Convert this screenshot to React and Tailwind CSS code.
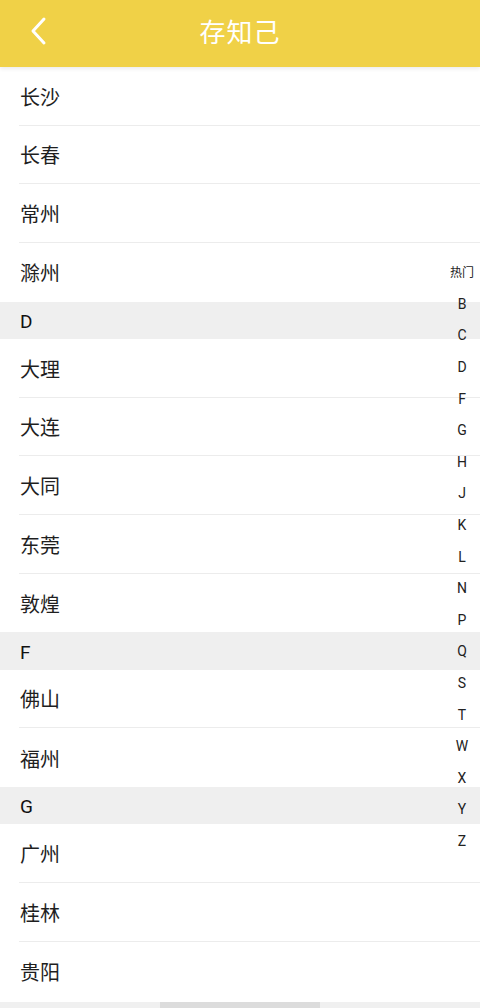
import React from 'react';

const sections = [
    { key: null, cities: ['长沙', '长春', '常州', '滁州'] },
    { key: 'D', cities: ['大理', '大连', '大同', '东莞', '敦煌'] },
    { key: 'F', cities: ['佛山', '福州'] },
    { key: 'G', cities: ['广州', '桂林', '贵阳'] },
];

const letters = ['热门', 'B', 'C', 'D', 'F', 'G', 'H', 'J', 'K', 'L', 'N', 'P', 'Q', 'S', 'T', 'W', 'X', 'Y', 'Z'];

const font = { fontFamily: 'Roboto, "Noto Sans CJK SC", sans-serif' };

const CityRow = ({ name, last }) => (
    <div className="pl-[19px]">
        <div className={`h-[58.67px] flex items-center pl-px pt-[4px] text-[20px] text-[#1f1f1f] ${last ? '' : 'border-b border-[#ececec]'}`}>
            {name}
        </div>
    </div>
);

const App = () => {
    return (
        <div className="relative w-[480px] h-[1008px] overflow-hidden bg-white flex flex-col" style={font}>
            <header className="relative z-10 h-[67px] shrink-0 bg-[#f0d147] flex items-center justify-center shadow-[0_2px_4px_rgba(0,0,0,0.08)]">
                <button className="absolute left-[26px] top-[16px] w-[24px] h-[30px] flex items-center justify-center">
                    <svg width="18" height="30" viewBox="0 0 18 30" fill="none">
                        <path d="M15 3 L4 15 L15 27" stroke="white" strokeWidth="3" strokeLinecap="round" strokeLinejoin="round" />
                    </svg>
                </button>
                <h1 className="text-white text-[26px] tracking-[1px]">存知己</h1>
            </header>

            <div className="flex-1 overflow-hidden">
                {sections.map((section, si) => (
                    <div key={si}>
                        {section.key && (
                            <div className="h-[37.33px] bg-[#efefef] flex items-center pl-[20px] pt-[4px] text-[19px] text-[#111]">
                                {section.key}
                            </div>
                        )}
                        {section.cities.map((city, ci) => (
                            <CityRow key={city} name={city} last={ci === section.cities.length - 1} />
                        ))}
                    </div>
                ))}
            </div>

            <div className="h-[6px] shrink-0 bg-[#f0f0f0] flex justify-center">
                <div className="w-[160px] h-[6px] bg-[#dcdcdc]" />
            </div>

            {/* side index */}
            <div className="absolute right-0 top-[256px] w-[36px] flex flex-col items-center">
                {letters.map((l) => (
                    <div
                        key={l}
                        className={`h-[31.6px] flex items-center justify-center pt-[2px] text-[#222] ${l === '热门' ? 'text-[12px]' : 'text-[14px]'}`}
                    >
                        {l}
                    </div>
                ))}
            </div>
        </div>
    );
};

export default App;
